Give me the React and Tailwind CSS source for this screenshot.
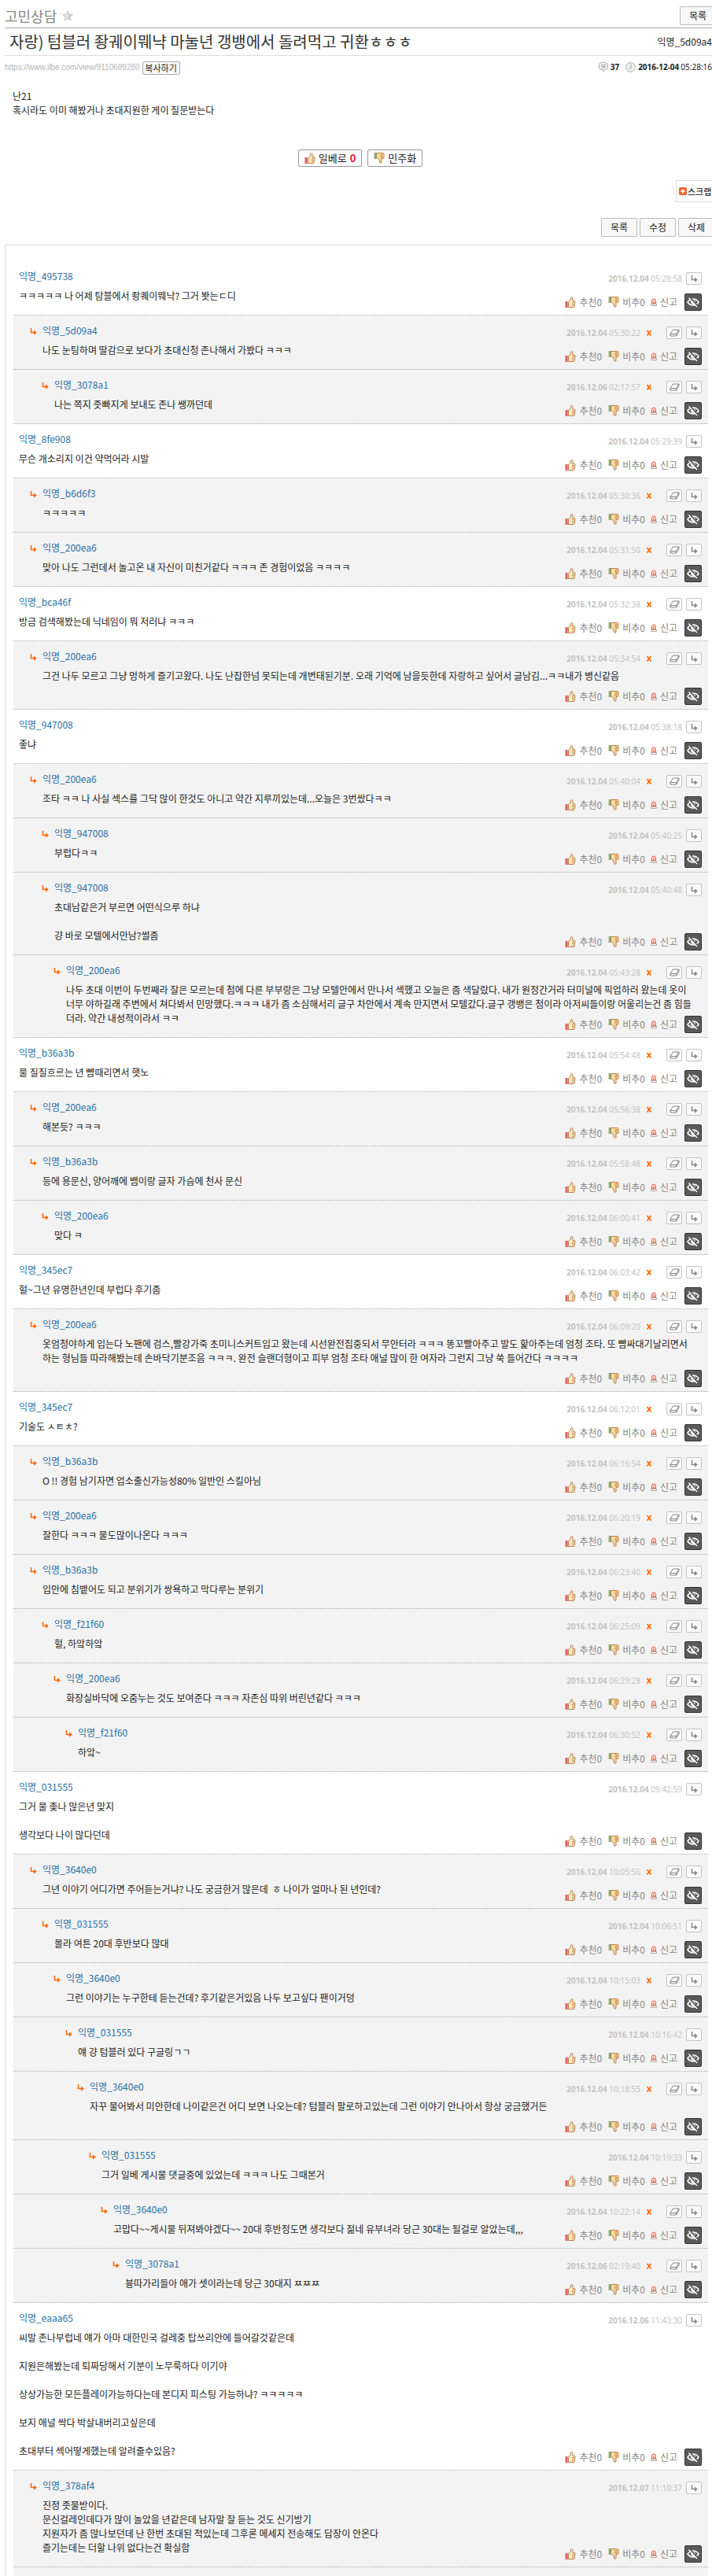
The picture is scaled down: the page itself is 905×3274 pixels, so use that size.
import React from 'react';

const comments = [
  { name: '익명_495738', depth: 0, date: '2016.12.04', time: '05:28:58', text: 'ㅋㅋㅋㅋㅋ 나 어제 탐블에서 좡퀘이뭬낙? 그거 봣는ㄷ디' },
  { name: '익명_5d09a4', depth: 1, date: '2016.12.04', time: '05:30:22', editable: true, text: '나도 눈팅하며 딸감으로 보다가 초대신청 존나해서 가봤다 ㅋㅋㅋ' },
  { name: '익명_3078a1', depth: 2, date: '2016.12.06', time: '02:17:57', editable: true, text: '나는 쪽지 좃빠지게 보내도 존나 쌩까던데' },
  { name: '익명_8fe908', depth: 0, date: '2016.12.04', time: '05:29:39', text: '무슨 개소리지 이건 약먹어라 시발' },
  { name: '익명_b6d6f3', depth: 1, date: '2016.12.04', time: '05:30:36', editable: true, text: 'ㅋㅋㅋㅋㅋ' },
  { name: '익명_200ea6', depth: 1, date: '2016.12.04', time: '05:31:50', editable: true, text: '맞아 나도 그런데서 놀고온 내 자신이 미친거같다 ㅋㅋㅋ 존 경험이었음 ㅋㅋㅋㅋ' },
  { name: '익명_bca46f', depth: 0, date: '2016.12.04', time: '05:32:38', editable: true, text: '방금 검색해봤는데 닉네임이 뭐 저러냐 ㅋㅋㅋ' },
  { name: '익명_200ea6', depth: 1, date: '2016.12.04', time: '05:34:54', editable: true, wide: true, text: '그건 나두 모르고 그냥 멍하게 즐기고왔다. 나도 난잡한넘 못되는데 개변태된기분. 오래 기억에 남을듯한데 자랑하고 싶어서 글남김...ㅋㅋ내가 병신같음' },
  { name: '익명_947008', depth: 0, date: '2016.12.04', time: '05:38:18', text: '좋냐' },
  { name: '익명_200ea6', depth: 1, date: '2016.12.04', time: '05:40:04', editable: true, text: '조타 ㅋㅋ 나 사실 섹스를 그닥 많이 한것도 아니고 약간 지루끼있는데...오늘은 3번쌌다ㅋㅋ' },
  { name: '익명_947008', depth: 2, date: '2016.12.04', time: '05:40:25', text: '부럽다ㅋㅋ' },
  { name: '익명_947008', depth: 2, date: '2016.12.04', time: '05:40:48', text: '초대남같은거 부르면 어떤식으루 하냐\n\n걍 바로 모텔에서만남?썰좀' },
  { name: '익명_200ea6', depth: 3, date: '2016.12.04', time: '05:43:28', editable: true, text: '나두 초대 이번이 두번째라 잘은 모르는데 첨에 다른 부부랑은 그냥 모텔안에서 만나서 섹했고 오늘은 좀 색달랐다. 내가 원정간거라 터미널에 픽업하러 왔는데 옷이\n너무 야하길래 주변에서 쳐다봐서 민망했다.ㅋㅋㅋ 내가 좀 소심해서리 글구 차안에서 계속 만지면서 모텔갔다.글구 갱뱅은 첨이라 아저씨들이랑 어울리는건 좀 힘들\n더라. 약간 내성적이라서 ㅋㅋ' },
  { name: '익명_b36a3b', depth: 0, date: '2016.12.04', time: '05:54:48', editable: true, text: '물 질질흐르는 년 뺨때리면서 햇노' },
  { name: '익명_200ea6', depth: 1, date: '2016.12.04', time: '05:56:38', editable: true, text: '해본듯? ㅋㅋㅋ' },
  { name: '익명_b36a3b', depth: 1, date: '2016.12.04', time: '05:58:48', editable: true, text: '등에 용문신, 양어깨에 뱀이랑 글자 가슴에 천사 문신' },
  { name: '익명_200ea6', depth: 2, date: '2016.12.04', time: '06:00:41', editable: true, text: '맞다 ㅋ' },
  { name: '익명_345ec7', depth: 0, date: '2016.12.04', time: '06:03:42', editable: true, text: '헐~그년 유명한년인데 부럽다 후기좀' },
  { name: '익명_200ea6', depth: 1, date: '2016.12.04', time: '06:09:20', editable: true, wide: true, text: '옷엄청야하게 입는다 노팬에 검스,빨강가죽 초미니스커트입고 왔는데 시선완전집중되서 무안터라 ㅋㅋㅋ 똥꼬빨아주고 발도 핥아주는데 엄청 조타. 또 뺨싸대기날리면서\n하는 형님들 따라해봤는데 손바닥기분조음 ㅋㅋㅋ. 완전 슬랜더형이고 피부 엄청 조타 애널 많이 한 여자라 그런지 그냥 쑥 들어간다 ㅋㅋㅋㅋ' },
  { name: '익명_345ec7', depth: 0, date: '2016.12.04', time: '06:12:01', editable: true, text: '기술도 ㅅㅌㅊ?' },
  { name: '익명_b36a3b', depth: 1, date: '2016.12.04', time: '06:16:54', editable: true, text: 'O !! 경험 남기자면 업소출신가능성80% 일반인 스킬아님' },
  { name: '익명_200ea6', depth: 1, date: '2016.12.04', time: '06:20:19', editable: true, text: '잘한다 ㅋㅋㅋ 물도많이나온다 ㅋㅋㅋ' },
  { name: '익명_b36a3b', depth: 1, date: '2016.12.04', time: '06:23:40', editable: true, text: '입안에 침뱉어도 되고 분위기가 쌍욕하고 막다루는 분위기' },
  { name: '익명_f21f60', depth: 2, date: '2016.12.04', time: '06:25:09', editable: true, text: '헐, 하앜하앜' },
  { name: '익명_200ea6', depth: 3, date: '2016.12.04', time: '06:29:28', editable: true, text: '화장실바닥에 오줌누는 것도 보여준다 ㅋㅋㅋ 자존심 따위 버린년같다 ㅋㅋㅋ' },
  { name: '익명_f21f60', depth: 4, date: '2016.12.04', time: '06:30:52', editable: true, text: '하앜~' },
  { name: '익명_031555', depth: 0, date: '2016.12.04', time: '09:42:59', text: '그거 물 좆나 많은년 맞지\n\n생각보다 나이 많다던데' },
  { name: '익명_3640e0', depth: 1, date: '2016.12.04', time: '10:05:56', editable: true, text: '그년 이야기 어디가면 주어듣는거냐? 나도 궁금한거 많은데  ㅎ 나이가 얼마나 된 년인데?' },
  { name: '익명_031555', depth: 2, date: '2016.12.04', time: '10:06:51', text: '몰라 여튼 20대 후반보다 많대' },
  { name: '익명_3640e0', depth: 3, date: '2016.12.04', time: '10:15:03', editable: true, text: '그런 이야기는 누구한테 듣는건데? 후기같은거있음 나두 보고싶다 팬이거덩' },
  { name: '익명_031555', depth: 4, date: '2016.12.04', time: '10:16:42', text: '얘 걍 텀블러 있다 구글링ㄱㄱ' },
  { name: '익명_3640e0', depth: 5, date: '2016.12.04', time: '10:18:55', editable: true, wide: true, text: '자꾸 물어봐서 미안한데 나이같은건 어디 보면 나오는데? 텀블러 팔로하고있는데 그런 이야기 안나아서 항상 궁금했거든' },
  { name: '익명_031555', depth: 6, date: '2016.12.04', time: '10:19:33', text: '그거 일베 게시물 댓글중에 있었는데 ㅋㅋㅋ 나도 그때본거' },
  { name: '익명_3640e0', depth: 7, date: '2016.12.04', time: '10:22:14', editable: true, text: '고맙다~~게시물 뒤져봐야겠다~~ 20대 후반정도면 생각보다 젊네 유부녀라 당근 30대는 될걸로 알았는데,,,' },
  { name: '익명_3078a1', depth: 8, date: '2016.12.06', time: '02:19:40', editable: true, text: '븅따가리들아 애가 셋이라는데 당근 30대지 ㅉㅉㅉ' },
  { name: '익명_eaaa65', depth: 0, date: '2016.12.06', time: '11:43:30', text: '씨발 존나부럽네 얘가 아마 대한민국 걸레중 탑쓰리안에 들어갈것같은데\n\n지원은해봤는데 퇴짜당해서 기분이 노무룩하다 이기야\n\n상상가능한 모든플레이가능하다는데 본디지 피스팅 가능하냐? ㅋㅋㅋㅋㅋ\n\n보지 애널 싹다 박살내버리고싶은데\n\n초대부터 섹어떻게했는데 알려줄수있음?' },
  { name: '익명_378af4', depth: 1, date: '2016.12.07', time: '11:10:37', text: '진정 좃물받이다.\n문신걸레인데다가 많이 놀았을 년같은데 남자말 잘 듣는 것도 신기방기\n지원자가 좀 많나보던데 난 한번 초대된 적있는데 그후론 메세지 전송해도 답장이 안온다\n즐기는데는 더할 나위 없다는건 확실함' },
];

function ThumbUp() {
  return (
    <svg width="14" height="14" viewBox="0 0 14 14" className="shrink-0">
      <path d="M4.5 6.5 7.500 4V1.500c0-1.200 2.400-1.200 2.500.3V5.500h2.200c1.200 0 1.200 1.600.4 2 .7.4.6 1.600-.1 1.900.6.5.3 1.600-.3 1.800.4.9-.1 2.300-1 2.300H4.500z" fill="#fde9c8" stroke="#b8722c" strokeWidth=".9" />
      <path d="M9 7.500h3.500M9 9.500h3M9 11.500h2.500" stroke="#b8722c" strokeWidth=".8" />
      <path d="M0 6h3.500v8H0z" fill="#d94b55" />
      <path d="M0 6h1.500v8H0z" fill="#f2a3a6" />
    </svg>
  );
}

function ThumbDown() {
  return (
    <svg width="14" height="14" viewBox="0 0 14 14" className="shrink-0">
      <path d="M3.500.5h8.300c1 0 1.300.9.900 1.500.7.300.8 1.300.2 1.700.6.400.6 1.400 0 1.800.5.800.1 1.800-.8 1.800H10v4.900c0 1.500-2.200 1.500-2.500 0L7 9 3.500 6.500z" fill="#f8dba6" stroke="#b8722c" strokeWidth=".9" />
      <path d="M8.500 2.500h3.500M8.500 4.300h3.500M8.500 6h3" stroke="#b8722c" strokeWidth=".8" />
      <path d="M0 0h3.500v8H0z" fill="#7f9c6c" />
      <path d="M0 0h1.500v8H0z" fill="#c6d6ba" />
    </svg>
  );
}

function Siren() {
  return (
    <svg width="8" height="10" viewBox="0 0 8 10" className="shrink-0">
      <path d="M1.500 7V3.500a2.500 2.500 0 0 1 5 0V7z" fill="#ffd9d2" stroke="#ee4a36" strokeWidth=".9" />
      <path d="M3.500 3.500h1V7h-1z" fill="#ee4a36" />
      <path d="M.5 7.500h7v2h-7z" fill="#fff" stroke="#b09a96" strokeWidth=".9" />
    </svg>
  );
}

function EyeOff() {
  return (
    <svg width="16" height="14" viewBox="0 0 16 14" fill="none" stroke="#fff">
      <path d="M1 7c3.500-5.300 10.500-5.300 14 0-3.500 5.300-10.500 5.300-14 0z" strokeWidth="1.500" />
      <circle cx="8" cy="7" r="2.500" fill="#ddd" />
      <path d="M4 1.500l10 11" stroke="#555" strokeWidth="2.500" />
      <path d="M2.500 1.500l10.500 11.500" strokeWidth="1.300" />
    </svg>
  );
}

function ReplyArrow({ color }) {
  return (
    <svg width="9" height="9" viewBox="0 0 9 9" className="shrink-0">
      <path d="M1.500 0v5.500H7" fill="none" stroke={color} strokeWidth="1.500" />
      <path d="M5 2.500 8.800 5.500 5 8.800z" fill={color} />
    </svg>
  );
}

function SmallButton({ label, children }) {
  return (
    <button aria-label={label} className="flex h-4 w-5 items-center justify-center rounded-[2px] border border-[#c4c4c4] bg-[#fbfbfb]">
      {children}
    </button>
  );
}

function GrayButton({ children }) {
  return (
    <button className="h-6 w-[46px] shrink-0 rounded-[1px] border border-[#bbb] bg-[#f8f8f8] text-xs text-[#222]">{children}</button>
  );
}

function Comment({ comment }) {
  const { name, depth, date, time, editable, wide, text } = comment;
  return (
    <li
      className={`flex border-b border-dotted border-[#a8a8a8] pt-[10px] pr-2 pb-[5px] ${depth ? 'bg-[#f3f3f3]' : 'bg-white'}`}
      style={{ paddingLeft: depth ? 6 + depth * 15 : 7 }}
    >
      {depth > 0 && (
        <div className="w-4 shrink-0 pt-[6px]">
          <ReplyArrow color="#f60" />
        </div>
      )}
      <div className="min-w-0 flex-1">
        <div className="flex h-5 items-start justify-between">
          <a href="#" className="leading-[18px] text-[#2a6fa5]">{name}</a>
          <div className="mt-1 flex h-4 items-center">
            <span className="font-['Noto_Sans'] text-[10px] leading-[14px] text-[#c4c4c4]">
              <b>{date}</b> {time}
            </span>
            {editable && (
              <>
                <button aria-label="삭제" className="ml-[7px] mr-[18px]">
                  <svg width="8" height="8" viewBox="0 0 8 8" className="block">
                    <path d="M1.500 1 6.500 7.500M6.500 1 1.500 7.500" stroke="#f60" strokeWidth="1.700" />
                  </svg>
                </button>
                <SmallButton label="수정">
                  <svg width="13" height="10" viewBox="0 0 13 10" fill="none" stroke="#777" strokeWidth=".9">
                    <path d="M4.500 1h7.500L8.500 6.500H1zM1 6.500V9h7.500V6.500M8.500 9 12 3.500V1" />
                  </svg>
                </SmallButton>
              </>
            )}
            <div className="ml-[5px]">
              <SmallButton label="답글">
                <ReplyArrow color="#888" />
              </SmallButton>
            </div>
          </div>
        </div>
        <div className="mt-[5px] -mr-2 leading-[18px] text-[#222]">
          {text.split('\n').map((line, i) => (
            <p key={i} className="min-h-[18px] whitespace-pre-wrap">{line}</p>
          ))}
        </div>
        <div className={`flex h-[22px] items-center justify-end text-[#888] ${wide ? 'mt-[6px]' : '-mt-3'}`}>
          <button className="mr-2 flex items-center gap-1"><ThumbUp />추천0</button>
          <button className="mr-[7px] flex items-center gap-1"><ThumbDown />비추0</button>
          <button className="mr-[9px] flex items-center gap-1"><Siren />신고</button>
          <button aria-label="숨기기" className="flex h-[22px] w-[22px] items-center justify-center rounded-[2px] border border-[#333] bg-[#5a5a5a]">
            <EyeOff />
          </button>
        </div>
      </div>
    </li>
  );
}

export default function App() {
  return (
    <div className="overflow-hidden bg-white font-['Noto_Sans_CJK_KR',sans-serif] text-xs text-[#222]">
      <div className="pl-[6px]">
        {/* Board name */}
        <header className="flex h-9 items-center justify-between border-b border-[#aaa]">
          <h1 className="flex items-center gap-[6px] pt-1 text-lg leading-6 text-[#888]">
            고민상담
            <svg width="16" height="16" viewBox="0 0 16 16">
              <path d="M8 .5 10.200 5.500 15.500 6 11.500 9.800 12.700 15.200 8 12.300 3.300 15.200 4.500 9.800.5 6 5.800 5.500z" fill="#cfcfcf" />
              <path d="M8 3.500 9.400 7 8 11 4.800 12.800 6 9.500 3.500 7 6.500 6.500z" fill="#e6e6e6" />
            </svg>
          </h1>
          <div className="-mr-[5px] pt-1"><GrayButton>목록</GrayButton></div>
        </header>

        {/* Title */}
        <div className="flex h-[35px] items-center justify-between border-b border-[#ddd] pl-[6px]">
          <h2 className="text-xl leading-6 text-[#333]">자랑) 텀블러 좡궤이뭬냑 마눌년 갱뱅에서 돌려먹고 귀환ㅎㅎㅎ</h2>
          <span>익명_5d09a4</span>
        </div>

        <div className="mt-[6px] flex h-[18px] items-center justify-between">
          <div className="flex items-center gap-[3px]">
            <a href="#" className="font-['Liberation_Sans'] text-[10px] text-[#b5b5b5]">https://www.ilbe.com/view/9110689280</a>
            <button className="h-[17px] w-12 rounded-[2px] border border-[#aaa] bg-[#fafafa] text-[11px] leading-[14px]">복사하기</button>
          </div>
          <div className="flex items-center font-['Noto_Sans'] text-[10px]">
            <svg width="12" height="13" viewBox="0 0 12 13" className="mr-[3px]">
              <path d="M4 .5h4a3.500 3.500 0 0 1 3.500 3.500v2A3.500 3.500 0 0 1 8 9.500L6.500 12 5 9.500H4A3.500 3.500 0 0 1 .5 6V4A3.500 3.500 0 0 1 4 .5z" fill="#f4f4f4" stroke="#aaa" />
              <path d="M3 3.500h6M3 5.500h6M4 7.300h4" stroke="#999" strokeWidth=".9" />
            </svg>
            <b className="mr-2">37</b>
            <svg width="13" height="13" viewBox="0 0 13 13" className="mr-[3px]">
              <circle cx="6.500" cy="6.500" r="5.800" fill="#f2f2f2" stroke="#aaa" />
              <path d="M7 2.500v4.500L4 9.500" fill="none" stroke="#999" />
            </svg>
            <b className="mr-[2px]">2016-12-04</b>05:28:16
          </div>
        </div>
      </div>

      {/* Post body */}
      <p className="mt-[18px] px-4 leading-[18px]">
        난21<br />
        혹시라도 이미 해봤거나 초대지원한 게이 질문받는다
      </p>

      <div className="mt-[41px] flex justify-center gap-[7px] pl-[11px] text-[13px]">
        <button className="flex h-[22px] items-center gap-1 rounded-[2px] border border-[#999] bg-[#fdfdfd] px-[7px]">
          <ThumbUp />일베로 <b className="text-[#e6183c]">0</b>
        </button>
        <button className="flex h-[22px] items-center gap-1 rounded-[2px] border border-[#999] bg-[#fdfdfd] px-[7px]">
          <ThumbDown />민주화
        </button>
      </div>

      <div className="mt-[17px] -mr-[6px] flex justify-end">
        <button className="flex h-7 w-[52px] items-center gap-px border border-[#ddd] bg-white pl-[3px] text-[11px] text-black">
          <svg width="10" height="10" viewBox="0 0 10 10" className="shrink-0">
            <rect width="10" height="10" rx="1.500" fill="#f26430" />
            <path d="M5 2.500v5M2.500 5h5" stroke="#fff" strokeWidth="2" />
          </svg>
          <span className="shrink-0">스크랩</span>
        </button>
      </div>

      <div className="mt-5 -mr-[3px] flex justify-end gap-[3px]">
        <GrayButton>목록</GrayButton>
        <GrayButton>수정</GrayButton>
        <GrayButton>삭제</GrayButton>
      </div>

      {/* Comments */}
      <section className="mt-[10px] ml-[6px] border-t border-l border-[#ddd] pt-5 pr-[5px] pl-[10px]">
        <ul>
          {comments.map((comment, i) => (
            <Comment key={i} comment={comment} />
          ))}
        </ul>
        <div className="h-[11px] bg-[#f3f3f3]" />
      </section>
    </div>
  );
}
